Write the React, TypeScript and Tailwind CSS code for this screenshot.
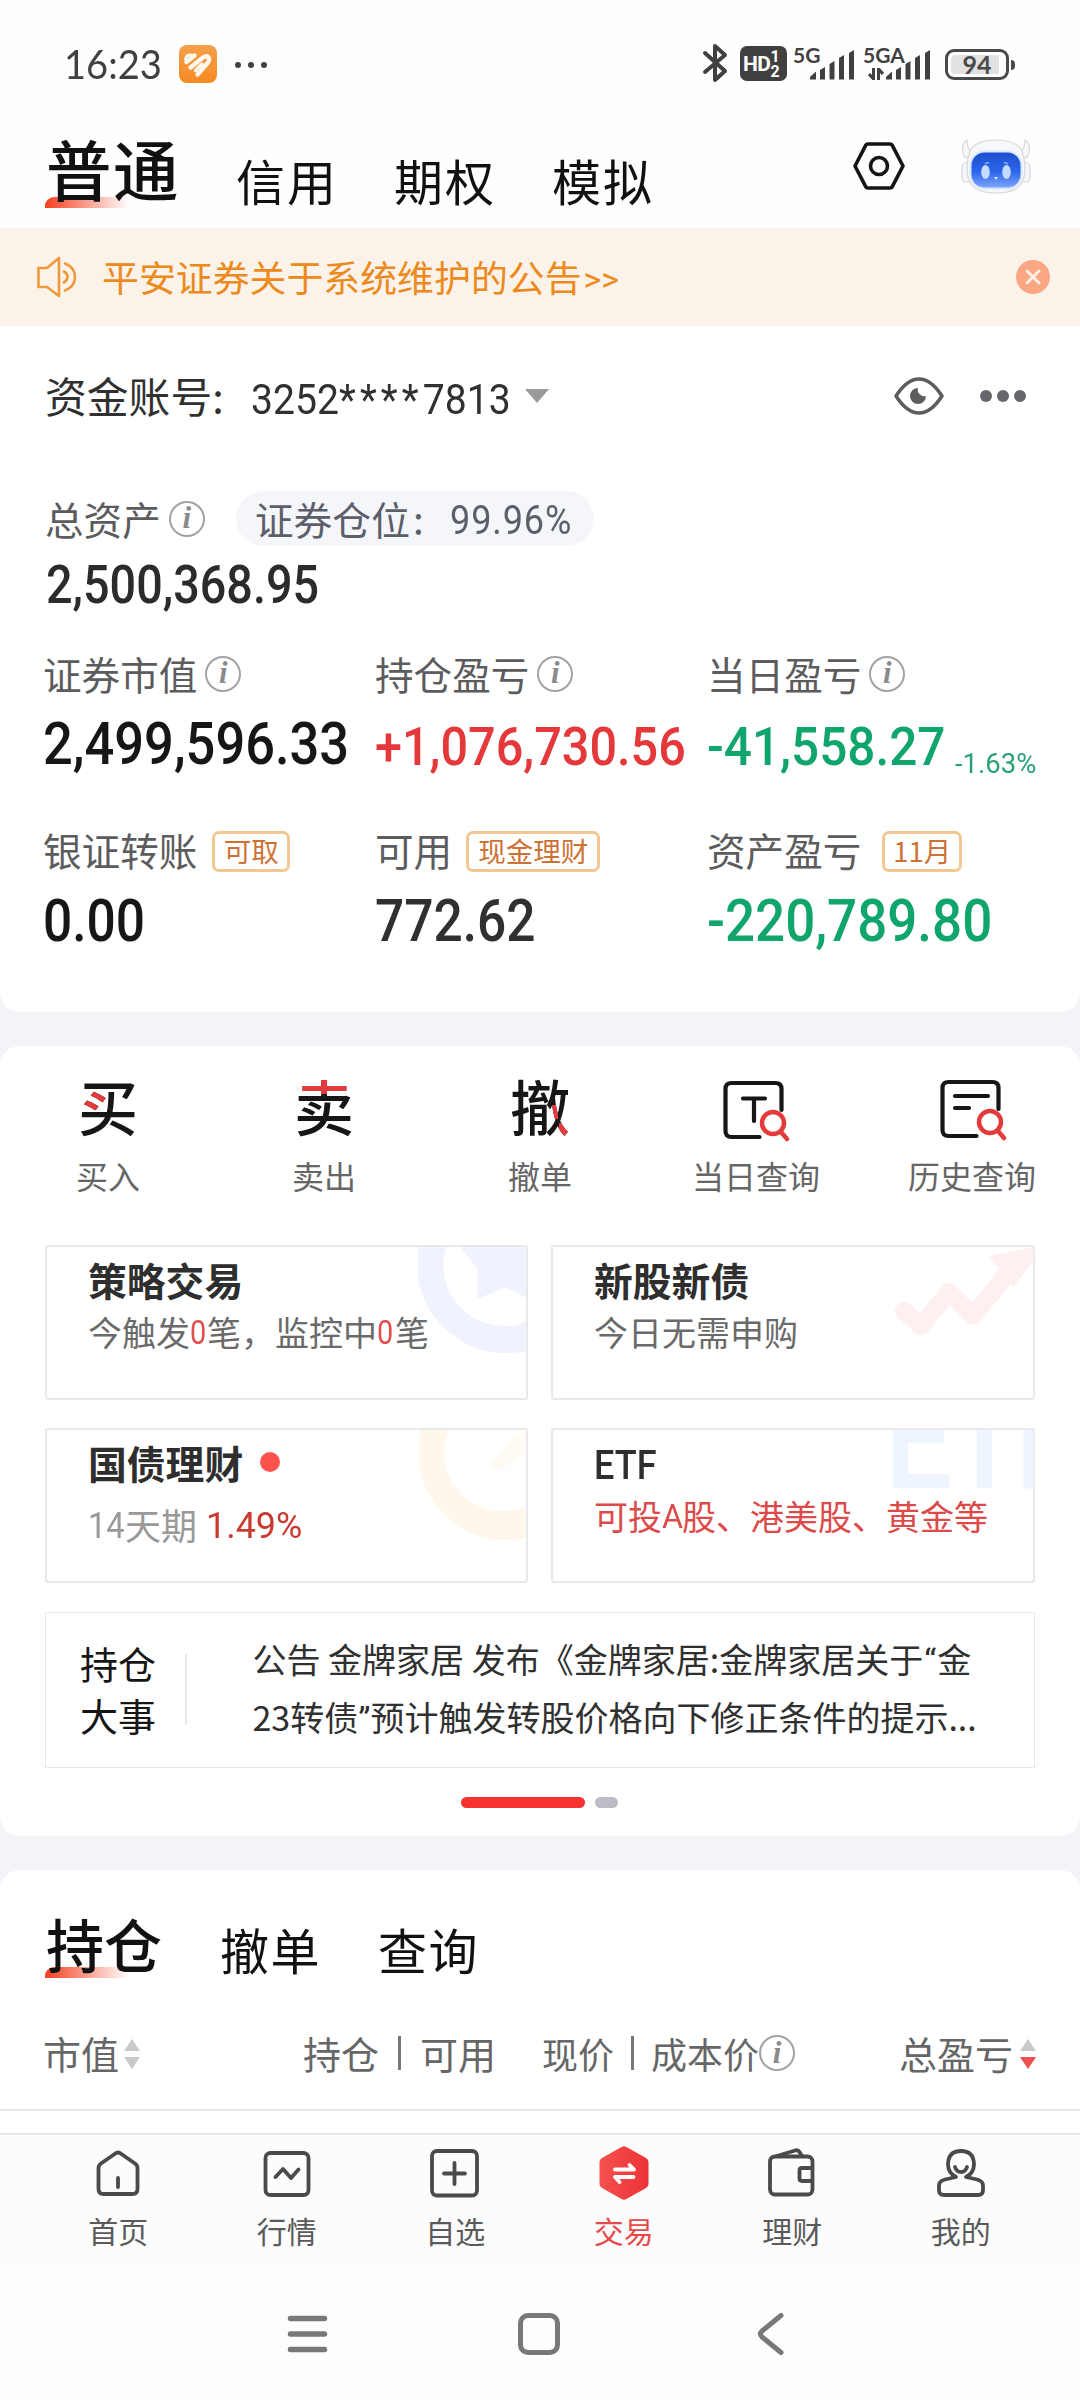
import type { ReactNode } from "react";

const SANS = "font-['Noto_Sans_CJK_SC','Noto_Sans',sans-serif]";

/* Condensed numerals used for every amount on the page. */
function Num({ className, children }: { className: string; children: ReactNode }) {
  return (
    <span className={`inline-block origin-left whitespace-nowrap font-[Roboto,sans-serif] ${className}`}>
      {children}
    </span>
  );
}

function Info({ className = "" }: { className?: string }) {
  return (
    <span
      className={`inline-flex size-[36px] shrink-0 items-center justify-center rounded-full border-2 border-[#a3a3a3] pb-[2px] font-['Liberation_Serif',serif] text-[31px] leading-none font-bold italic text-[#8a8a8a] ${className}`}
    >
      i
    </span>
  );
}

function Badge({ className = "", children }: { className?: string; children: ReactNode }) {
  return (
    <span
      className={`mt-[4px] flex h-[41px] items-center justify-center rounded-[7px] border-[3px] border-[#f2c793] pb-[1px] text-[27.5px] leading-none whitespace-nowrap text-[#cd7135] ${className}`}
    >
      {children}
    </span>
  );
}

function SignalBars() {
  return (
    <svg width="46" height="30" viewBox="0 0 46 30" fill="#404040">
      <path d="M1 29.5V27l6-5.5v8z" />
      <path d="M11 29.5V20l5-3v12.5z" />
      <path d="M20.5 29.5V14l5-3v18.5z" />
      <path d="M30 29.5V8l5-3v24.5z" />
      <path d="M40 29.5V3l5-3v29.5z" />
    </svg>
  );
}

function StatusBar() {
  return (
    <div className="flex h-[129px] items-center pr-[65px] pl-[64px] text-[#404040]">
      <span className="w-[115px] font-[Lato,sans-serif] text-[40.5px] leading-none">
        <span className="inline-block origin-left scale-x-[0.94]">16:23</span>
      </span>
      <svg className="-mt-[1px]" width="38" height="38" viewBox="0 0 38 38">
        <defs>
          <linearGradient id="app" x1="0" y1="0" x2="0" y2="1">
            <stop offset="0" stopColor="#f5a04a" />
            <stop offset="1" stopColor="#f78a22" />
          </linearGradient>
        </defs>
        <rect width="38" height="38" rx="8" fill="url(#app)" />
        <g fill="none" stroke="#fff8ee" strokeWidth="4.400" strokeLinecap="round" strokeLinejoin="round">
          <path d="M7.500 17L15.500 10.500" />
          <path d="M11.500 22.500L24 12.500q4-2.500 5.500 0t-.5 5L18.500 29.500" />
          <path d="M16.500 25.500l6.500-6.500" strokeWidth="3.400" />
          <path d="M6.500 14q1-4.500 6-4" strokeWidth="3" />
        </g>
      </svg>
      <div className="ml-[18px] flex gap-[7px]">
        <i className="size-[6px] rounded-full bg-[#404040]" />
        <i className="size-[6px] rounded-full bg-[#404040]" />
        <i className="size-[6px] rounded-full bg-[#404040]" />
      </div>
      <svg className="-mt-[3px] ml-auto" width="26" height="40" viewBox="0 0 26 40" fill="none" stroke="#404040" strokeWidth="4" strokeLinejoin="round" strokeLinecap="round">
        <path d="M3 10l20 18-10 9V3l10 9L3 29" />
      </svg>
      <div className="-mt-[2px] ml-[12px] flex h-[35px] w-[47px] rounded-[7px] bg-[#404040] font-[Roboto,sans-serif] font-bold text-white">
        <span className="mt-[8px] ml-[3px] text-[21px] leading-none tracking-[-0.5px]">HD</span>
        <span className="mt-[3px] flex flex-col text-[16px] leading-[15px]">
          <span>1</span>
          <span>2</span>
        </span>
      </div>
      <div className="-mt-[2px] ml-[6px] flex h-[36px] w-[62px] justify-end font-[Lato,sans-serif] text-[21px] leading-[18px] font-bold">
        <span className="-mr-[11px] w-[27px]">5G</span>
        <span className="mt-[4px]">
          <SignalBars />
        </span>
      </div>
      <div className="relative -mt-[2px] ml-[8px] flex h-[36px] w-[68px] justify-end font-[Lato,sans-serif] text-[21px] leading-[18px] font-bold">
        <span className="-mr-[21px] w-[43px]">5GA</span>
        <span className="mt-[4px]">
          <SignalBars />
        </span>
        <svg className="absolute bottom-[2px] left-[5px]" width="16" height="12" viewBox="0 0 16 12" stroke="#404040" strokeWidth="3" fill="none">
          <path d="M5.500 0v11L1 6M10.500 12V1L15 6" />
        </svg>
      </div>
      <div className="-mt-[1px] ml-[14px] flex h-[31px] w-[64px] items-center justify-center rounded-[9px] border-[3px] border-[#4a4a4a] p-[3px]">
        <div className="flex h-full w-full items-center justify-center rounded-[4px] bg-[linear-gradient(90deg,#e2e2e2_92%,#fff_92%)] font-[Lato,sans-serif] text-[25px] leading-none font-bold text-[#4a4a4a]">
          94
        </div>
      </div>
      <i className="ml-[2px] h-[10px] w-[4px] rounded-r-full bg-[#4a4a4a]" />
    </div>
  );
}

function Robot() {
  return (
    <svg width="70" height="56" viewBox="0 0 70 56">
      <defs>
        <linearGradient id="face" x1="0" y1="0" x2="0" y2="1">
          <stop offset="0" stopColor="#1d4fd0" />
          <stop offset=".55" stopColor="#2c66ec" />
          <stop offset="1" stopColor="#7ba4fa" />
        </linearGradient>
      </defs>
      <g fill="#f6f7f9" stroke="#d6d8dc" strokeWidth="1.200">
        <path d="M6 2C1 5 0 12 4 20l8-5C7 12 6 7 6 2zM64 2c5 3 6 10 2 18l-8-5c5-3 6-8 6-13z" />
        <rect x="1" y="25" width="10" height="19" rx="4" />
        <rect x="59" y="25" width="10" height="19" rx="4" />
        <path d="M35 2c12 0 20 2 25 9 3 6 4 13 4 20 0 17-9 24-29 24S6 48 6 31c0-7 1-14 4-20C15 4 23 2 35 2z" />
      </g>
      <rect x="8.500" y="12.500" width="53" height="39" rx="15" fill="#dbe8ff" />
      <rect x="10.500" y="14.500" width="49" height="35" rx="13" fill="url(#face)" />
      <ellipse cx="24.500" cy="34" rx="4.300" ry="7" fill="#c3dcff" />
      <ellipse cx="45.500" cy="34" rx="4.300" ry="7" fill="#c3dcff" />
      <path d="M33 39h4l-2 3z" fill="#dbe8ff" />
      <path d="M24 26q2-2 4-1M43 25q2-1 4 1" stroke="#8fb6ff" strokeWidth="1.500" fill="none" />
    </svg>
  );
}

function TopTabs() {
  return (
    <div className="flex h-[99px] items-end pl-[45px] text-[#111]">
      <div className="relative mb-[28px] text-[65.5px] leading-none font-medium tracking-[1.5px]">
        <i className="absolute -bottom-[8px] left-0 h-[11px] w-[84px] rounded-tl-[9px] bg-linear-to-r from-[#f5401f] to-[#f5401f]/0" />
        <span className="relative left-[1px]">普通</span>
      </div>
      <span className="mb-[24px] ml-[57px] text-[49px] leading-none tracking-[2px]">信用</span>
      <span className="mb-[24px] ml-[56px] text-[49px] leading-none tracking-[2px]">期权</span>
      <span className="mb-[24px] ml-[56px] text-[49px] leading-none tracking-[2px]">模拟</span>
      <svg className="mb-[37px] ml-auto" width="52" height="50" viewBox="0 0 52 50" fill="none" stroke="#151515" strokeWidth="3.600" strokeLinejoin="round">
        <path d="M15 3h22q1.500 0 2.300 1.300L50 25 39.300 45.700Q38.500 47 37 47H15q-1.500 0-2.300-1.300L2 25 12.700 4.300Q13.500 3 15 3z" />
        <circle cx="26" cy="25" r="8.500" />
      </svg>
      <div className="mr-[49px] mb-[34px] ml-[56px]">
        <Robot />
      </div>
    </div>
  );
}

function Notice() {
  return (
    <div className="flex h-[97.5px] items-center bg-[#fbf2e9] pr-[30px] pl-[36px] text-[#ec8a20]">
      <svg width="42" height="42" viewBox="0 0 42 42" fill="none" stroke="#ee9a3c" strokeWidth="2.600" strokeLinejoin="round" strokeLinecap="round">
        <path d="M2.500 12h8.500L23 2v38L11 31H2.500z" />
        <path d="M28 15.500q3.500 2 3.500 5.500T28 26.500" />
        <path d="M29 7.500q10 4 10 13.500T29 34.500" />
      </svg>
      <span className="ml-[24px] -mt-[1px] text-[36.9px] leading-none whitespace-nowrap">平安证券关于系统维护的公告</span>
      <span className="ml-[2px] font-[Roboto,sans-serif] text-[34px] leading-none mt-[5px]">&gt;&gt;</span>
      <svg className="ml-auto" width="34" height="34" viewBox="0 0 34 34">
        <circle cx="17" cy="17" r="17" fill="#fca783" />
        <path d="M11 11l12 12M23 11L11 23" stroke="#fff1e6" strokeWidth="2.800" strokeLinecap="round" />
      </svg>
    </div>
  );
}

const LABEL = "-mt-[1px] text-[38.6px] leading-none whitespace-nowrap text-[#5c5c5e]";

function Assets() {
  return (
    <section className="h-[686.5px] rounded-b-[20px] bg-white">
      <div className="flex h-[141px] items-center pr-[54px] pl-[45px]">
        <span className="text-[41.8px] leading-none text-[#303030]">资金账号</span>
        <span className="w-[40px] text-[41.5px] leading-none text-[#303030]">:</span>
        <Num className="mt-[9px] -ml-[1px] w-[274px] scale-x-[0.92] text-[42.5px] leading-none text-[#303030]">
          3252<span className="tracking-[4.5px]">****</span>7813
        </Num>
        <i className="h-0 w-0 border-x-[12px] border-t-[14px] border-x-transparent border-t-[#999]" />
        <svg className="ml-auto" width="52" height="40" viewBox="0 0 52 40">
          <path d="M3 20Q14 3 26 3t23 17Q38 37 26 37T3 20z" fill="none" stroke="#5d5d5d" strokeWidth="3.600" strokeLinejoin="round" />
          <path d="M25 12a8 8 0 1 0 8 8 6.500 6.500 0 0 1-8-8z" fill="#5d5d5d" />
        </svg>
        <div className="ml-[35px] flex gap-[5px]">
          <i className="size-[12px] rounded-full bg-[#66666c]" />
          <i className="size-[12px] rounded-full bg-[#66666c]" />
          <i className="size-[12px] rounded-full bg-[#66666c]" />
        </div>
      </div>
      <div className="mt-[13px] flex h-[78px] items-center pl-[45px]">
        <span className={LABEL}>总资产</span>
        <Info className="ml-[8px]" />
        <div className="ml-[31px] flex h-[55px] w-[358px] items-center rounded-full bg-[#f4f6fa] pl-[19px] text-[38.800px] leading-none text-[#5c5e6a]">
          <span>证券仓位</span>
          <span className="w-[40px] pl-[3px]">:</span>
          <Num className="mt-[5px] scale-x-[0.9] text-[40px] leading-none tracking-[1px] text-[#5c5e6a]">99.96%</Num>
        </div>
      </div>
      <div className="h-[54px] pl-[46px] leading-[54px]">
        <Num className="scale-x-[0.882] text-[53px] font-medium text-[#2b2b2b]">2,500,368.95</Num>
      </div>

      <div className="mt-[38px] grid grid-cols-[332px_332px_1fr] pl-[43px]">
        <div>
          <div className="flex h-[48px] items-center">
            <span className={LABEL}>证券市值</span>
            <Info className="ml-[8px]" />
          </div>
          <div className="mt-[16px] h-[62px] leading-[60px]">
            <Num className="scale-x-[0.896] text-[58.5px] font-medium text-[#161616]">2,499,596.33</Num>
          </div>
        </div>
        <div>
          <div className="flex h-[48px] items-center">
            <span className={LABEL}>持仓盈亏</span>
            <Info className="ml-[8px]" />
          </div>
          <div className="mt-[19px] h-[59px] leading-[60px]">
            <Num className="scale-x-[0.9] text-[54px] font-medium text-[#e4383b]">+1,076,730.56</Num>
          </div>
        </div>
        <div>
          <div className="flex h-[48px] items-center">
            <span className={LABEL}>当日盈亏</span>
            <Info className="ml-[8px]" />
          </div>
          <div className="mt-[19px] flex h-[59px] leading-[60px]">
            <Num className="w-[248px] scale-x-[0.916] text-[54px] font-medium text-[#10a56c]">-41,558.27</Num>
            <Num className="mt-[17px] scale-x-[1.02] text-[27px] text-[#2aa274]">-1.63%</Num>
          </div>
        </div>
      </div>

      <div className="mt-[50px] grid grid-cols-[332px_332px_1fr] pl-[43px]">
        <div>
          <div className="flex h-[48px] items-center">
            <span className={LABEL}>银证转账</span>
            <Badge className="ml-[15px] w-[78px]">可取</Badge>
          </div>
          <div className="mt-[17px] h-[60px] leading-[60px]">
            <Num className="scale-x-[0.88] text-[58.5px] font-medium text-[#161616]">0.00</Num>
          </div>
        </div>
        <div>
          <div className="flex h-[48px] items-center">
            <span className={LABEL}>可用</span>
            <Badge className="ml-[14px] w-[134px]">现金理财</Badge>
          </div>
          <div className="mt-[17px] h-[60px] leading-[60px]">
            <Num className="scale-x-[0.88] text-[58.5px] font-medium text-[#303030]">772.62</Num>
          </div>
        </div>
        <div>
          <div className="flex h-[48px] items-center">
            <span className={LABEL}>资产盈亏</span>
            <Badge className="ml-[21px] w-[80px]">11月</Badge>
          </div>
          <div className="mt-[17px] h-[60px] leading-[60px]">
            <Num className="scale-x-[0.905] text-[58.5px] font-medium text-[#10a56c]">-220,789.80</Num>
          </div>
        </div>
      </div>
    </section>
  );
}

const GLYPH = "-mt-[10px] bg-no-repeat bg-clip-text text-[60px] leading-[64px] font-medium text-transparent";

function Magnifier() {
  return (
    <g stroke="#e43a3c" fill="none" strokeWidth="4.500" strokeLinecap="round">
      <circle cx="50" cy="44" r="11" />
      <path d="M58 53l6 7" />
    </g>
  );
}

function QuickActions() {
  const items: { label: string; icon: ReactNode }[] = [
    {
      label: "买入",
      icon: (
        <span
          className={`${GLYPH} [background-image:linear-gradient(#e43a3c,#e43a3c),linear-gradient(#161616,#161616)] [background-position:0_17px,0_0] [background-size:28px_20px,100%_100%]`}
        >
          买
        </span>
      ),
    },
    {
      label: "卖出",
      icon: (
        <span
          className={`${GLYPH} [background-image:linear-gradient(#e43a3c,#e43a3c),linear-gradient(#161616,#161616)] [background-position:0_0,0_0] [background-size:100%_21px,100%_100%]`}
        >
          卖
        </span>
      ),
    },
    {
      label: "撤单",
      icon: (
        <span
          className={`${GLYPH} [background-image:linear-gradient(#e43a3c,#e43a3c),linear-gradient(#e43a3c,#e43a3c),linear-gradient(#161616,#161616)] [background-position:42px_32px,49px_50px,0_0] [background-size:6px_14px,20px_30px,100%_100%]`}
        >
          撤
        </span>
      ),
    },
    {
      label: "当日查询",
      icon: (
        <svg className="mt-[3px] ml-[2px]" width="68" height="66" viewBox="0 0 68 66" fill="none" stroke="#161616" strokeWidth="4.200" strokeLinecap="round">
          <path d="M38 58H10q-6 0-6-6V10q0-6 6-6h44q6 0 6 6v21" transform="translate(-1.500)" />
          <path d="M20 19.500h22M31 20v22" />
          <Magnifier />
        </svg>
      ),
    },
    {
      label: "历史查询",
      icon: (
        <svg className="mt-[1px] ml-[4px]" width="68" height="66" viewBox="0 0 68 66" fill="none" stroke="#161616" strokeWidth="4.200" strokeLinecap="round">
          <path d="M38 58H10q-6 0-6-6V10q0-6 6-6h44q6 0 6 6v21" transform="translate(-1.500)" />
          <path d="M15 18h33M15 30h14" />
          <Magnifier />
        </svg>
      ),
    },
  ];
  return (
    <div className="grid grid-cols-5 pt-[32px]">
      {items.map((it) => (
        <div key={it.label} className="flex flex-col items-center">
          <div className="flex h-[64px] items-center">{it.icon}</div>
          <span className="mt-[13px] text-[32px] leading-[40px] text-[#666]">{it.label}</span>
        </div>
      ))}
    </div>
  );
}

const CARD = "relative h-[154.5px] overflow-hidden rounded-[3px] border-2 border-[#e9e9eb] pl-[41px]";
const TITLE = "relative text-[38.8px] leading-[44px] font-bold text-[#2e2e2e]";

function Cards() {
  return (
    <div className="mt-[50px] grid grid-cols-[483px_484px] gap-x-[23px] gap-y-[28.5px] px-[45px]">
      <div className={`${CARD} pt-[10px]`}>
        <svg className="absolute top-0 right-0" width="108" height="110" viewBox="4 0 108 110" fill="#f0f3fe">
          <path d="M4 0a90 90 0 0 0 108 104V75A61 61 0 0 1 32 0z" />
          <path d="M46 0h68v52L92 40 63 52l1-30z" />
        </svg>
        <div className={TITLE}>策略交易</div>
        <div className="relative mt-[9px] flex text-[34px] leading-[44px] whitespace-nowrap text-[#6a6a6a]">
          今触发<Num className="w-[17px] scale-x-[0.85] text-[34px] text-[#e24d4d]">0</Num>笔，监控中
          <Num className="w-[18px] scale-x-[0.85] text-[34px] text-[#e24d4d]">0</Num>笔
        </div>
      </div>
      <div className={`${CARD} pt-[10px]`}>
        <svg className="absolute top-0 right-0" width="140" height="100" viewBox="0 0 140 100" fill="none">
          <path d="M11 64l17 15 28-34 24 24 42-52" stroke="#fef0f0" strokeWidth="18" strokeLinejoin="round" strokeLinecap="round" />
          <path d="M96 9l44-9v14l-20 26z" fill="#fef0f0" />
        </svg>
        <div className={TITLE}>新股新债</div>
        <div className="relative mt-[9px] text-[34px] leading-[44px] text-[#6a6a6a]">今日无需申购</div>
      </div>
      <div className={`${CARD} pt-[10px]`}>
        <svg className="absolute top-0 right-0" width="107" height="114" viewBox="7 0 107 114" fill="#fef8ec">
          <path d="M9 0a88 88 0 0 0 105 108V76A58 58 0 0 1 37 0z" />
          <path d="M80 32L100 8l14-6v22L88 40q-12 2-8-8z" opacity=".6" />
        </svg>
        <div className={`${TITLE} flex items-center`}>
          国债理财
          <i className="ml-[17px] size-[20px] rounded-full bg-[#fc544d]" />
        </div>
        <div className="relative mt-[18px] flex text-[36px] leading-[44px] text-[#999]">
          <Num className="w-[37px] scale-x-[0.88] text-[37px] leading-[48px]">14</Num>天期
          <Num className="ml-[9px] scale-x-[0.97] text-[37px] leading-[48px] text-[#c93b2f]">1.49%</Num>
        </div>
      </div>
      <div className={`${CARD} pt-[10px]`}>
        <span className="absolute top-[-61px] left-[331px] origin-left scale-x-[0.86] font-[Roboto,sans-serif] text-[142px] leading-none font-medium tracking-[-8px] whitespace-nowrap text-[#eff5fe]">
          ETF
        </span>
        <div className={TITLE}>
          <Num className="scale-x-[0.9] text-[40px] font-medium">ETF</Num>
        </div>
        <div className="relative mt-[6px] flex text-[34px] leading-[44px] whitespace-nowrap text-[#dc4a4a]">
          可投<Num className="w-[20px] scale-x-[0.95] text-[34px]">A</Num>股、港美股、黄金等
        </div>
      </div>
    </div>
  );
}

function Events() {
  return (
    <div className="mx-[45px] mt-[29px] flex h-[156.5px] items-center border-[1.5px] border-[#e9e9eb]">
      <div className="-mt-[2px] ml-[34px] w-[78px] text-[38px] leading-[52px] text-[#161616]">持仓大事</div>
      <i className="ml-[27px] h-[71px] w-[1.5px] bg-[#e9e9eb]" />
      <div className="-mt-[1px] ml-[66px] text-[34px] leading-[55px] whitespace-nowrap text-[#303030]">
        <div>
          公告 金牌家居 发布《金牌家居:金牌家居关于<span className="mx-[1px] font-[Roboto,sans-serif]">“</span>金
        </div>
        <div>
          23转债<span className="font-[Roboto,sans-serif]">”</span>预计触发转股价格向下修正条件的提示...
        </div>
      </div>
    </div>
  );
}

function Sort({ down }: { down: string }) {
  return (
    <span className="mt-[1px] flex flex-col gap-[6px]">
      <i className="h-0 w-0 border-x-[8px] border-b-[12px] border-x-transparent border-b-[#c9c9c9]" />
      <i className={`h-0 w-0 border-x-[8px] border-t-[12px] border-x-transparent ${down}`} />
    </span>
  );
}

function Holdings() {
  return (
    <section className="flex h-[263px] flex-col rounded-t-[20px] bg-white">
      <div className="flex h-[110px] items-end pl-[45px] text-[#111]">
        <div className="relative mb-[8px] text-[58px] leading-none font-medium">
          <i className="absolute -bottom-[6px] left-0 h-[11px] w-[84px] rounded-tl-[9px] bg-linear-to-r from-[#f5401f] to-[#f5401f]/0" />
          <span className="relative left-[1px]">持仓</span>
        </div>
        <span className="mb-[7px] ml-[59px] text-[49px] leading-none tracking-[1.5px]">撤单</span>
        <span className="mb-[7px] ml-[57px] text-[49px] leading-none tracking-[1.5px]">查询</span>
      </div>
      <div className="mt-[48px] flex h-[50px] items-center pr-[44px] pl-[43px] text-[38px] leading-none whitespace-nowrap text-[#666]">
        <span>市值</span>
        <span className="ml-[5px]">
          <Sort down="border-t-[#c9c9c9]" />
        </span>
        <span className="ml-[163px]">持仓</span>
        <i className="mx-[19px] h-[34px] w-[3px] bg-[#777]" />
        <span>可用</span>
        <span className="ml-[46px] text-[36px]">现价</span>
        <i className="mr-[17px] ml-[17px] h-[34px] w-[3px] bg-[#777]" />
        <span className="text-[36px]">成本价</span>
        <Info />
        <span className="ml-auto">总盈亏</span>
        <span className="ml-[7px]">
          <Sort down="border-t-[#ee4f4f]" />
        </span>
      </div>
      <i className="mt-[31px] h-[2px] bg-[#e8e8e8]" />
    </section>
  );
}

function TabBar() {
  const stroke = { fill: "none", stroke: "#4a4a4a", strokeWidth: 3.8, strokeLinecap: "round", strokeLinejoin: "round" } as const;
  const tabs: { label: string; icon: ReactNode }[] = [
    {
      label: "首页",
      icon: (
        <svg width="54" height="54" viewBox="0 0 54 54" {...stroke}>
          <path d="M27 6.500q1.500 0 3 1.200L44 17.500q2.500 1.800 2.500 4.500v21q0 5-5 5h-29q-5 0-5-5V22q0-2.700 2.500-4.500L24 7.700q1.500-1.200 3-1.200zM27 32v9" />
        </svg>
      ),
    },
    {
      label: "行情",
      icon: (
        <svg width="54" height="54" viewBox="0 0 54 54" {...stroke}>
          <rect x="5.500" y="7" width="43" height="42" rx="5" />
          <path d="M15.500 31l7.500-8 8 9 7.500-8.500" />
        </svg>
      ),
    },
    {
      label: "自选",
      icon: (
        <svg width="54" height="54" viewBox="0 0 54 54" {...stroke}>
          <rect x="4" y="5" width="45" height="44.500" rx="5" />
          <path d="M26.500 17v21M16 27.500h21" />
        </svg>
      ),
    },
    {
      label: "交易",
      icon: (
        <svg width="54" height="54" viewBox="0 0 54 54">
          <defs>
            <linearGradient id="trade" x1="0" y1="0" x2="1" y2="0">
              <stop offset="0" stopColor="#f4504f" />
              <stop offset="1" stopColor="#ee3336" />
            </linearGradient>
          </defs>
          <path d="M24.500 1q2.500-1.500 5 0L49 12q2.500 1.500 2.500 4v22q0 2.500-2.500 4L29.500 53q-2.500 1.500-5 0L5 42q-2.500-1.500-2.500-4V16q0-2.500 2.500-4z" fill="url(#trade)" />
          <path d="M18 23.500h19l-4.500-4.500M36.500 31H18l4.500 5" fill="none" stroke="#fff" strokeWidth="3.800" strokeLinecap="round" strokeLinejoin="round" />
        </svg>
      ),
    },
    {
      label: "理财",
      icon: (
        <svg width="54" height="54" viewBox="0 0 54 54" {...stroke}>
          <rect x="5" y="10.500" width="42.500" height="38" rx="5" />
          <path d="M12 10l18-5.500q3-1 4.500 1.500l2.500 4M47 22H37q-2.500 0-2.500 2.500v8q0 2.500 2.500 2.500h10" />
        </svg>
      ),
    },
    {
      label: "我的",
      icon: (
        <svg width="54" height="54" viewBox="0 0 54 54" {...stroke}>
          <path d="M22 31Q14 27 14 18 14.500 5 27 5t13 13q0 9-8 13l11 2.500q6 1.500 6 6V44q0 5-5 5H10q-5 0-5-5v-4.500q0-4.500 6-6z" />
          <path d="M21 21q1.500 5 6 5t6-5" />
        </svg>
      ),
    },
  ];
  return (
    <nav className="grid h-[134px] grid-cols-6 border-t-2 border-[#e6e6e6] bg-[#fcfcfc] pt-[11px] pr-[35px] pl-[34px]">
      {tabs.map((t) => (
        <div key={t.label} className="flex flex-col items-center">
          {t.icon}
          <span className={`mt-[10px] text-[30px] leading-[40px] ${t.label === "交易" ? "text-[#e8484a]" : "text-[#5a5a5a]"}`}>
            {t.label}
          </span>
        </div>
      ))}
    </nav>
  );
}

function SystemNav() {
  return (
    <div className="flex flex-1 items-center bg-[#fdfdfd] pl-[287px]">
      <svg width="42" height="44" viewBox="0 0 42 44" stroke="#787878" strokeWidth="5.500" strokeLinecap="round">
        <path d="M3.500 6.500h34M3.500 22h34M3.500 37.500h34" />
      </svg>
      <i className="ml-[189px] size-[42px] rounded-[10px] border-[5px] border-[#787878]" />
      <svg className="ml-[197px]" width="28" height="44" viewBox="0 0 28 44" fill="none" stroke="#787878" strokeWidth="5" strokeLinecap="round" strokeLinejoin="round">
        <path d="M24 3.500L5 19q-3 3 0 6l19 15.500" />
      </svg>
    </div>
  );
}

export default function App() {
  return (
    <div className={`flex h-[2400px] w-[1080px] flex-col overflow-hidden bg-[#f3f5f9] ${SANS}`}>
      <header className="bg-[#fefefe]">
        <StatusBar />
        <TopTabs />
      </header>
      <Notice />
      <div className="bg-[#f3f5f9]">
        <Assets />
      </div>
      <section className="mt-[34px] h-[790px] rounded-[20px] bg-white">
        <QuickActions />
        <Cards />
        <Events />
        <div className="mt-[29px] flex justify-center gap-[10px] pr-[2px]">
          <i className="h-[11px] w-[124px] rounded-full bg-[#f63230]" />
          <i className="h-[11px] w-[23px] rounded-full bg-[#bcbdc4]" />
        </div>
      </section>
      <div className="mt-[34px]">
        <Holdings />
      </div>
      <TabBar />
      <SystemNav />
    </div>
  );
}
